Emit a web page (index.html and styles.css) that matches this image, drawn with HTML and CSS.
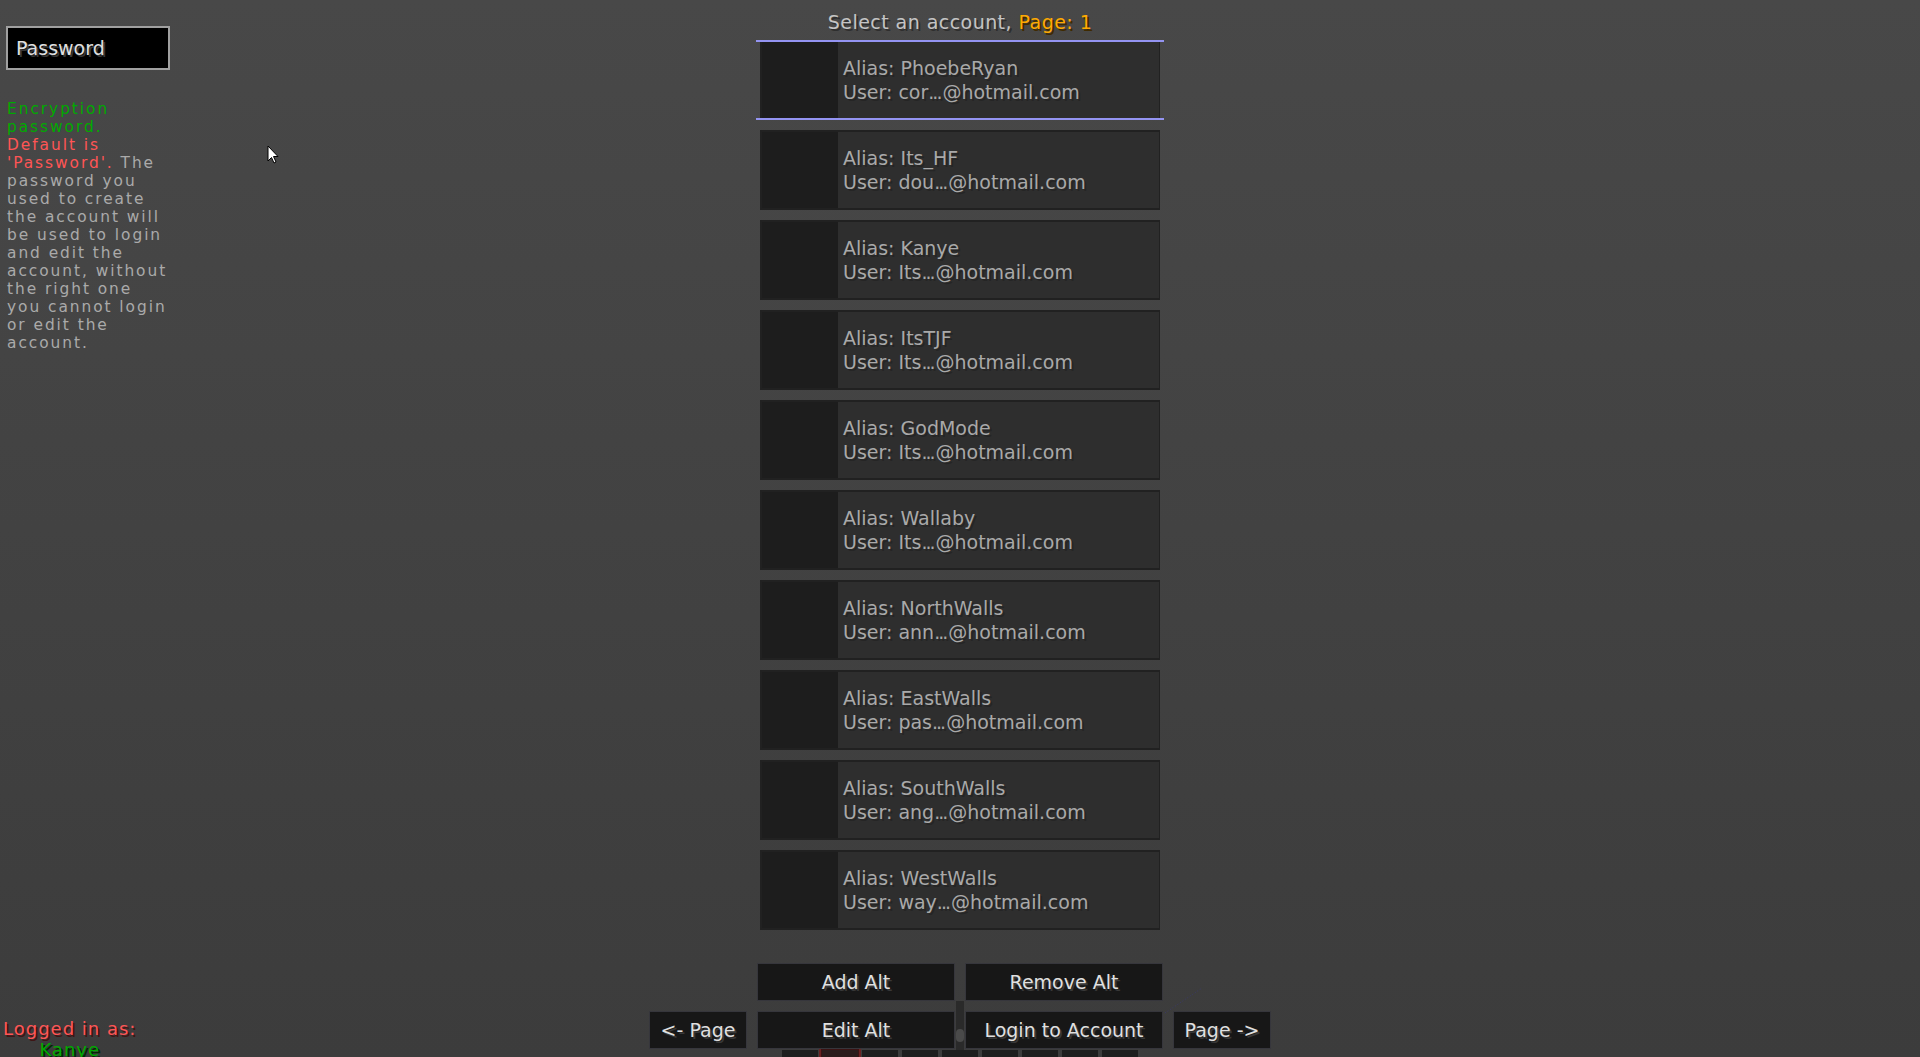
FILE: index.html
```html
<!DOCTYPE html>
<html>
<head>
<meta charset="utf-8">
<title>Alt Manager</title>
<link rel="stylesheet" href="styles.css">
</head>
<body>
<div class="screen">
  <aside class="side">
    <div class="side-top">
      <div class="pwbox">Password</div>
      <div class="desc">
        <div class="ln g">Encryption</div>
        <div class="ln g">password.</div>
        <div class="ln r">Default is</div>
        <div class="ln"><span class="r">'Password'.</span> The</div>
        <div class="ln">password you</div>
        <div class="ln">used to create</div>
        <div class="ln">the account will</div>
        <div class="ln">be used to login</div>
        <div class="ln">and edit the</div>
        <div class="ln">account, without</div>
        <div class="ln">the right one</div>
        <div class="ln">you cannot login</div>
        <div class="ln">or edit the</div>
        <div class="ln">account.</div>
      </div>
    </div>
    <div class="logged">
      <div class="lr">Logged in as:</div>
      <div class="lg">Kanye</div>
    </div>
  </aside>

  <main class="center">
    <div class="title">Select an account, <span class="gold">Page: 1</span></div>
    <div class="list">
      <div class="slot sel"><div class="row"><div class="head"></div><div class="info"><div>Alias: PhoebeRyan</div><div>User: cor<span class="el">...</span>@hotmail.com</div></div></div></div>
      <div class="slot"><div class="row"><div class="head"></div><div class="info"><div>Alias: Its_HF</div><div>User: dou<span class="el">...</span>@hotmail.com</div></div></div></div>
      <div class="slot"><div class="row"><div class="head"></div><div class="info"><div>Alias: Kanye</div><div>User: Its<span class="el">...</span>@hotmail.com</div></div></div></div>
      <div class="slot"><div class="row"><div class="head"></div><div class="info"><div>Alias: ItsTJF</div><div>User: Its<span class="el">...</span>@hotmail.com</div></div></div></div>
      <div class="slot"><div class="row"><div class="head"></div><div class="info"><div>Alias: GodMode</div><div>User: Its<span class="el">...</span>@hotmail.com</div></div></div></div>
      <div class="slot"><div class="row"><div class="head"></div><div class="info"><div>Alias: Wallaby</div><div>User: Its<span class="el">...</span>@hotmail.com</div></div></div></div>
      <div class="slot"><div class="row"><div class="head"></div><div class="info"><div>Alias: NorthWalls</div><div>User: ann<span class="el">...</span>@hotmail.com</div></div></div></div>
      <div class="slot"><div class="row"><div class="head"></div><div class="info"><div>Alias: EastWalls</div><div>User: pas<span class="el">...</span>@hotmail.com</div></div></div></div>
      <div class="slot"><div class="row"><div class="head"></div><div class="info"><div>Alias: SouthWalls</div><div>User: ang<span class="el">...</span>@hotmail.com</div></div></div></div>
      <div class="slot"><div class="row"><div class="head"></div><div class="info"><div>Alias: WestWalls</div><div>User: way<span class="el">...</span>@hotmail.com</div></div></div></div>
    </div>

    <div class="buttons">
      <div class="btn r1 c2">Add Alt</div>
      <div class="btn r1 c3">Remove Alt</div>
      <div class="btn r2 c1">&lt;- Page</div>
      <div class="btn r2 c2">Edit Alt</div>
      <div class="btn r2 c3">Login to Account</div>
      <div class="btn r2 c4">Page -&gt;</div>
      <div class="scroll"><div class="knob"></div></div>
      <svg class="dots" width="40" height="28" viewBox="0 0 40 28"><line x1="1" y1="26" x2="38" y2="1" stroke="#3a3a6a" stroke-width="1" stroke-dasharray="1 2"/></svg>
    </div>
    <div class="hotbar">
      <div class="hs"></div><div class="hs on"></div><div class="hs"></div><div class="hs"></div><div class="hs"></div><div class="hs"></div><div class="hs"></div><div class="hs"></div><div class="hs"></div>
    </div>
  </main>
  <div class="right"></div>
</div>
<svg class="cursor" width="13" height="20" viewBox="0 0 13 20"><path d="M1 1 L1 16 L4.5 12.5 L7 18 L9 17 L6.5 11.5 L11 11.5 Z" fill="#fff" stroke="#000" stroke-width="1"/></svg>
</body>
</html>
```

FILE: styles.css
```css
html, body {
  margin: 0;
  padding: 0;
}
body {
  width: 1920px;
  height: 1057px;
  overflow: hidden;
  background: linear-gradient(#484848, #3c3c3c);
  font-family: "DejaVu Sans", "Verdana", sans-serif;
  font-size: 19px;
  color: #e0e0e0;
  position: relative;
}
.screen {
  display: grid;
  grid-template-columns: 1fr 622px 1fr;
  height: 1057px;
}
.side {
  display: flex;
  flex-direction: column;
  justify-content: space-between;
  align-items: flex-start;
}
.side-top {
  padding: 26px 0 0 6px;
}
.pwbox {
  width: 164px;
  height: 44px;
  box-sizing: border-box;
  border: 2px solid #a0a0a0;
  background: #000;
  color: #e0e0e0;
  padding-left: 8px;
  line-height: 40px;
  text-shadow: 2px 2px 0 #383838;
  white-space: nowrap;
}
.desc {
  margin-top: 30px;
  padding-left: 1px;
  font-size: 15.4px;
  letter-spacing: 1.95px;
  color: #aaaaaa;
  white-space: nowrap;
}
.ln {
  height: 18px;
  line-height: 18px;
}
.g { color: #00aa00; }
.r { color: #ff5555; }
.logged {
  padding-left: 3px;
  font-size: 18px;
  letter-spacing: 1px;
  line-height: 21px;
  text-align: center;
  white-space: nowrap;
}
.lr {
  color: #ff5555;
  text-shadow: 2px 2px 0 #3f1515;
}
.lg {
  color: #00aa00;
  text-shadow: 2px 2px 0 #002a00;
}
.center {
  display: flex;
  flex-direction: column;
  align-items: center;
}
.title {
  padding-top: 10px;
  line-height: 24px;
  letter-spacing: 0.45px;
  color: #c4c4c4;
  text-shadow: 2px 2px 0 #2e2e2e;
  white-space: nowrap;
}
.gold {
  color: #ffaa00;
  text-shadow: 2px 2px 0 #3f2a00;
}
.list {
  width: 408px;
  margin-top: 6px;
  display: flex;
  flex-direction: column;
  gap: 10px;
}
.slot {
  height: 80px;
  box-sizing: border-box;
  padding: 0 4px;
}
.slot.sel {
  border-top: 2px solid #9494f2;
  border-bottom: 2px solid #9494f2;
}
.row {
  height: 80px;
  box-sizing: border-box;
  border: 2px solid #212121;
  border-right-width: 1px;
  background: #2e2e2e;
  display: flex;
}
.slot.sel .row {
  height: 76px;
  border-top: 0;
  border-bottom: 0;
}
.head {
  width: 76px;
  flex: none;
  background: #1d1d1d;
}
.info {
  padding-left: 5px;
  display: flex;
  flex-direction: column;
  justify-content: center;
  line-height: 24px;
  color: #a9a9a9;
  text-shadow: 2px 2px 0 #252525;
  white-space: nowrap;
}
.el {
  letter-spacing: -2px;
  margin-right: 2px;
}
.buttons {
  position: relative;
  width: 622px;
  margin-top: 33px;
  display: grid;
  grid-template-columns: 98px 198px 198px 98px;
  grid-template-rows: 38px 38px;
  column-gap: 10px;
  row-gap: 10px;
}
.r1 { grid-row: 1; }
.r2 { grid-row: 2; }
.c1 { grid-column: 1; }
.c2 { grid-column: 2; }
.c3 { grid-column: 3; }
.c4 { grid-column: 4; }
.btn {
  box-sizing: border-box;
  border: 1px solid #36363c;
  background: #171717;
  color: #e0e0e0;
  text-shadow: 2px 2px 0 #383838;
  line-height: 36px;
  text-align: center;
  white-space: nowrap;
}
.scroll {
  position: absolute;
  left: 307px;
  top: 38px;
  width: 8px;
  height: 49px;
  background: #2a2a2a;
}
.knob {
  margin-top: 28px;
  height: 13px;
  border-radius: 4px;
  background: #4a4a4a;
}
.dots {
  position: absolute;
  left: 515px;
  top: 24px;
}
.hotbar {
  width: 622px;
  margin-top: 1px;
  padding-left: 133px;
  box-sizing: border-box;
  display: flex;
  gap: 4px;
}
.hs {
  width: 36px;
  height: 10px;
  background: #1e1e1e;
  flex: none;
}
.hs.on {
  background: #2a1c1c;
  box-shadow: 0 0 0 1px #3a1414, 0 0 0 3px #6a2222;
}
.cursor {
  position: absolute;
  left: 267px;
  top: 145px;
}
```
